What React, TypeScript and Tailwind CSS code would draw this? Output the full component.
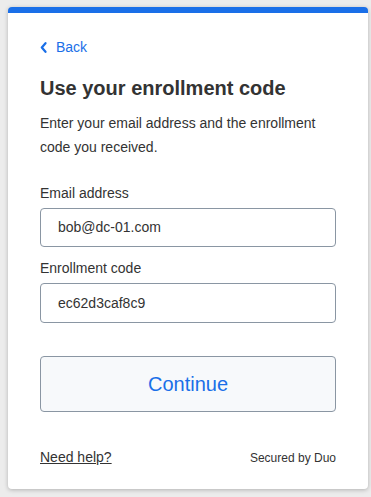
export default function App() {
  return (
    <div
      className="min-h-[497px] w-[371px] bg-[#ececec] pt-[7px] pl-[8px]"
      style={{ fontFamily: "Arial, 'Liberation Sans', sans-serif" }}
    >
      <div className="w-[360px] h-[482px] bg-white rounded-[4px] overflow-hidden shadow-[0_1px_4px_rgba(0,0,0,0.25)] border-t-[6px] border-[#1a6fe8]">
        <div className="px-[32px] pt-[26px]">
          {/* Back */}
          <a className="flex items-center gap-[9px] text-[#1a6fe8] text-[14px] h-[16px]">
            <svg width="7" height="11" viewBox="0 0 7 11" fill="none">
              <path d="M5.5 1.2 L1.8 5.5 L5.5 9.8" stroke="#1a6fe8" strokeWidth="2.2" strokeLinecap="round" strokeLinejoin="round" />
            </svg>
            <span>Back</span>
          </a>

          <h1 className="mt-[21px] text-[20px] font-bold text-[#333333] leading-[24px]">
            Use your enrollment code
          </h1>

          <p className="mt-[11px] text-[14px] leading-[24px] text-[#333333]">
            Enter your email address and the enrollment code you received.
          </p>

          <label className="block mt-[26px] text-[14px] text-[#333333] leading-[16px]">
            Email address
          </label>
          <div className="mt-[7px] h-[39px] w-[296px] border border-[#8a96a3] rounded-[4px] flex items-center px-[17px] text-[14px] text-[#333333]">
            bob@dc-01.com
          </div>

          <label className="block mt-[13px] text-[14px] text-[#333333] leading-[16px]">
            Enrollment code
          </label>
          <div className="mt-[7px] h-[40px] w-[296px] border border-[#8a96a3] rounded-[4px] flex items-center px-[17px] text-[14px] text-[#333333]">
            ec62d3caf8c9
          </div>

          <button className="mt-[33px] h-[56px] w-[296px] border border-[#8a96a3] rounded-[4px] bg-[#f7f9fb] text-[#1a6fe8] text-[20px]">
            Continue
          </button>

          <div className="mt-[35px] flex items-center justify-between">
            <a className="text-[14px] text-[#333333] underline">Need help?</a>
            <span className="text-[12px] text-[#333333]">Secured by Duo</span>
          </div>
        </div>
      </div>
    </div>
  );
}
